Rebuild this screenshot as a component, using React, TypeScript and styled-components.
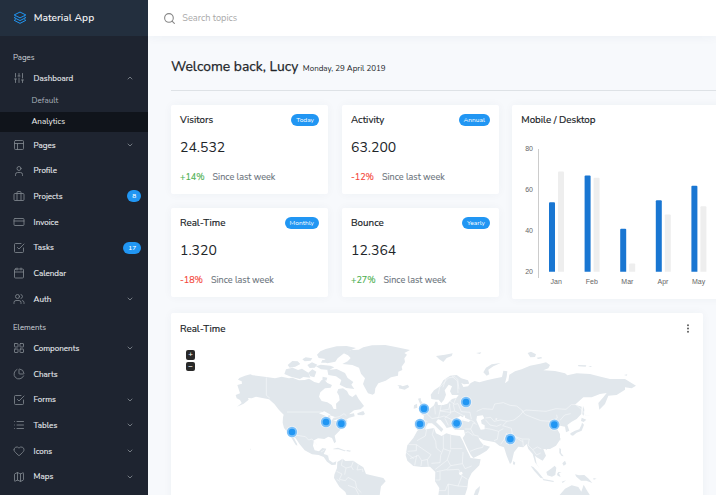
import React from "react";
import styled, { createGlobalStyle, css } from "styled-components";
import {
  SlidersVertical, Layout, User, Luggage, CreditCard, SquareCheck, Calendar,
  Users, LayoutGrid, ChartPie, List, Heart, Map as MapIcon, ChevronDown, ChevronUp, Search,
} from "lucide-react";

const Global = createGlobalStyle`
  * { box-sizing: border-box; }
  html, body { margin: 0; height: 100%; overflow: hidden; }
  body { background: #f7f9fc; font-family: Nunito, Lato, sans-serif; color: #212529; }
`;

const Shell = styled.div`
  display: flex;
  width: 716px;
  height: 495px;
  overflow: hidden;
`;

const Sidebar = styled.nav`
  flex: 0 0 148px;
  background: #1e2430;
  color: #e6e8ea;
`;

const Brand = styled.div`
  display: flex;
  align-items: center;
  height: 36px;
  padding-left: 13px;
  gap: 6.7px;
  background: #232f3e;
  font-size: 10.2px;
  font-weight: 600;
  color: #f0f1f3;
  svg { color: #2196f3; }
`;

const Section = styled.div<{ $first?: boolean }>`
  height: ${(p) => (p.$first ? "29.3px" : "23.5px")};
  padding: ${(p) => (p.$first ? "15.5px" : "9.7px")} 0 0 13px;
  font-size: 7.9px;
  line-height: 12px;
  color: #ced4da;
`;

const Item = styled.div`
  display: flex;
  align-items: center;
  height: 25.7px;
  padding: 0 14px 0 13px;
  font-size: 8.05px;
  color: #e9ecef;
  > svg { color: #80868e; }
`;

const ItemLabel = styled.span`
  flex: 1;
  padding-left: 8.6px;
  -webkit-text-stroke: 0.1px;
`;

const Count = styled.span`
  margin-right: -7px;
  padding: 0 4.8px;
  border-radius: 6px;
  background: #2196f3;
  color: #fff;
  font-size: 6.6px;
  font-weight: 600;
  line-height: 12px;
`;

const SubItem = styled.div<{ $active?: boolean }>`
  height: 20.6px;
  padding-left: 31.5px;
  font-size: 8.05px;
  line-height: 20.8px;
  color: #adb5bd;
  ${(p) => p.$active && css`background: #10141b; color: #f3f4f5;`}
`;

const Main = styled.main`
  flex: 1;
  min-width: 0;
`;

const Topbar = styled.header`
  display: flex;
  align-items: center;
  gap: 6.3px;
  height: 36px;
  padding-left: 15px;
  background: #fff;
  box-shadow: 0 0 12px rgba(40, 60, 100, 0.06);
  color: #a9a9a9;
  font-size: 9.2px;
  svg { color: #868686; }
`;

const Content = styled.div`
  padding: 0 0 0 23px;
`;

const Heading = styled.div`
  display: flex;
  align-items: baseline;
  gap: 4.5px;
  height: 54.5px;
  padding-top: 21px;
  margin-bottom: 14px;
  border-bottom: 1px solid #dee2e6;
`;

const Welcome = styled.h1`
  margin: 0;
  font-size: 13.9px;
  line-height: 19px;
  font-weight: 400;
  -webkit-text-stroke: 0.25px;
`;

const Today = styled.span`
  font-size: 8px;
`;

const Overview = styled.section`
  display: flex;
  gap: 13px;
  height: 194.5px;
  margin-bottom: 14px;
`;

const StatGrid = styled.div`
  display: grid;
  grid-template-columns: 157px 157px;
  grid-template-rows: 89px 89px;
  gap: 14.5px 14px;
  flex: none;
`;

const Card = styled.article`
  background: #fff;
  border-radius: 2px;
  box-shadow: 0 0 10px rgba(40, 60, 100, 0.045);
`;

const StatCard = styled(Card)`
  padding: 9px;
`;

const CardHead = styled.div`
  display: flex;
  align-items: center;
  justify-content: space-between;
  height: 12px;
`;

const CardTitle = styled.h2`
  margin: 0;
  font-size: 9.8px;
  line-height: 12px;
  font-weight: 400;
  -webkit-text-stroke: 0.2px;
`;

const Period = styled.span`
  padding: 0 5px;
  border-radius: 6px;
  background: #2196f3;
  color: #fff;
  font-size: 6.6px;
  line-height: 12px;
`;

const Figure = styled.div`
  margin-top: 12px;
  font-size: 14px;
  line-height: 20px;
`;

const Trend = styled.div<{ $up: boolean }>`
  display: flex;
  gap: 8px;
  margin-top: 13px;
  font-size: 9px;
  line-height: 12px;
  color: ${(p) => (p.$up ? "#4caf50" : "#f44336")};
  -webkit-text-stroke: 0.12px;
`;

const Muted = styled.span`
  color: #6c757d;
`;

const ChartCard = styled(Card)`
  flex: 0 0 327px;
  padding: 9.3px 9.3px;
`;

const ChartSvg = styled.svg`
  display: block;
  margin-top: 19.2px;
  margin-left: -0.8px;
  text { font: 7px "Liberation Sans", sans-serif; fill: #666; }
`;

const MapCard = styled(Card)`
  width: 532px;
  height: 260px;
  padding: 9.6px 9px;
`;

const MapBody = styled.div`
  display: flex;
  padding-top: 15.6px;
`;

const ZoomControls = styled.div`
  display: flex;
  flex-direction: column;
  gap: 2px;
  flex: none;
  width: 16px;
  padding-left: 5.7px;
`;

const ZoomButton = styled.div`
  width: 9.6px;
  height: 9.4px;
  border-radius: 2px;
  background: #292929;
  color: #fff;
  text-align: center;
  font: 8px/9px "Liberation Sans", sans-serif;
`;

const MapSvg = styled.svg`
  flex: none;
  margin-top: -10.4px;
  .land { fill: #e1e7ec; }
  .water { fill: #fff; }
  .border { fill: none; stroke: #f8fafb; stroke-width: 1.7; stroke-linejoin: round; }
`;

const stats = [
  { title: "Visitors", period: "Today", value: "24.532", change: "+14%", up: true },
  { title: "Activity", period: "Annual", value: "63.200", change: "-12%", up: false },
  { title: "Real-Time", period: "Monthly", value: "1.320", change: "-18%", up: false },
  { title: "Bounce", period: "Yearly", value: "12.364", change: "+27%", up: true },
];

const months = [
  { name: "Jan", mobile: 54, desktop: 69 },
  { name: "Feb", mobile: 67, desktop: 66 },
  { name: "Mar", mobile: 41, desktop: 24 },
  { name: "Apr", mobile: 55, desktop: 48 },
  { name: "May", mobile: 62, desktop: 52 },
];

type Entry = { icon: React.ElementType; label: string; count?: number; more?: boolean };

const pages: Entry[] = [
  { icon: Layout, label: "Pages", more: true },
  { icon: User, label: "Profile" },
  { icon: Luggage, label: "Projects", count: 8 },
  { icon: CreditCard, label: "Invoice" },
  { icon: SquareCheck, label: "Tasks", count: 17 },
  { icon: Calendar, label: "Calendar" },
  { icon: Users, label: "Auth", more: true },
];

const elements: Entry[] = [
  { icon: LayoutGrid, label: "Components", more: true },
  { icon: ChartPie, label: "Charts" },
  { icon: SquareCheck, label: "Forms", more: true },
  { icon: List, label: "Tables", more: true },
  { icon: Heart, label: "Icons", more: true },
  { icon: MapIcon, label: "Maps", more: true },
];

// Feather outlines that differ from the icon package's current drawings.
const Briefcase = () => (
  <svg width="12" height="12" viewBox="0 0 24 24" fill="none" stroke="currentColor" strokeWidth="1.7" strokeLinejoin="round">
    <rect x="2" y="7" width="20" height="14" rx="2" />
    <path d="M8 21V5a2 2 0 0 1 2-2h4a2 2 0 0 1 2 2v16" />
  </svg>
);
const CheckBox = () => (
  <svg width="12" height="12" viewBox="0 0 24 24" fill="none" stroke="currentColor" strokeWidth="1.7" strokeLinecap="round" strokeLinejoin="round">
    <path d="M9 11l3 3L22 4" />
    <path d="M21 12v7a2 2 0 0 1-2 2H5a2 2 0 0 1-2-2V5a2 2 0 0 1 2-2h11" />
  </svg>
);
const Stack = () => (
  <svg width="14" height="14" viewBox="0 0 24 24" fill="none" stroke="currentColor" strokeWidth="1.7" strokeLinejoin="round">
    <path d="M12 1.8 22 6.8 12 11.8 2 6.8Z" />
    <path d="M4.5 10 2 11.4l10 5 10-5L19.500 10M4.500 14.600 2 16l10 5.200L22 16l-2.500-1.400" />
  </svg>
);

const NavEntry = ({ icon: Icon, label, count, more }: Entry) => (
  <Item>
    {Icon === Luggage ? <Briefcase /> : Icon === SquareCheck ? <CheckBox /> : <Icon size={12} strokeWidth={1.7} />}
    <ItemLabel>{label}</ItemLabel>
    {count !== undefined && <Count>{count}</Count>}
    {more && <ChevronDown size={8} strokeWidth={2.6} />}
  </Item>
);

const yOf = (v: number) => 4 + ((80 - v) / 60) * 122.7;

const BarChart = () => (
  <ChartSvg width="309" height="142" viewBox="0 0 309 142">
    {[80, 60, 40, 20].map((t) => (
      <text key={t} x="12" y={yOf(t) + 2.2} textAnchor="end">{t}</text>
    ))}
    <path d="M17.500 4V133" stroke="#ccc" strokeWidth="1" />
    {months.map((m, i) => (
      <g key={m.name}>
        <path fill="#1976d2" d={`M${28 + i * 35.6} 126.7V${yOf(m.mobile) + 1}q0-1 1-1h4q1 0 1 1V126.7z`} />
        <path fill="#eee" d={`M${37 + i * 35.6} 126.7V${yOf(m.desktop) + 1}q0-1 1-1h4q1 0 1 1V126.7z`} />
        <text x={35.2 + i * 35.6} y="138.5" textAnchor="middle">{m.name}</text>
      </g>
    ))}
  </ChartSvg>
);

const cities = [
  [381, 382], [483, 352], [529, 357], [777, 312], [765, 358],
  [903, 292], [875, 356], [1036, 403], [1168, 360],
];

const WorldMap = () => (
  <MapSvg width="500" height="160" viewBox="93 106 1500 480">
    <g className="land">
      <path d="M217 241l14-4-1-7-11-5 4-5 17-7 16-4 7 3 12 1 29 4 26 4 20-5 22 5 10-2 20 8 17-1 13-4 16 10 14 4 8-10 8-1 9 10 14 6-4 8-17 2-14 12-4 13 8 13 17 4 13 8 6 12 8 0-1-16 11-10-2-14-6-10 4-10 14-2 12 8 6 12 10 6 11-8 8 14 16 21-10 10-20 3-15 12 15-3 2 9-16 4-10 6 5 4-15 12-8 16-16 16 4 18-5 5-7-16-11-4-12 7-19-2-12 6-3 16 5 14 13 3 10-10 12 2-8 16 13 4 3 14 12 8 10-4-2 10-12 1-14-10-10-14-15-6-20-2-22-12-15-18-12-18-7-4 11 20 1 6-5-3-11-18-12-18-12-14-4-16 1-16 2-8-14-14-14-18-16-14-20-4-19-4-13 5-11-1 2 5-15 12-20 9 14-11-5-9-10-5-3-10 13-5z" />
      <path d="M456 150l10-10 16-7 33-8 30-1 28 6-35 15-20 16-7 10-24 5-16-6 11-7-21-3zM358 208l5-14 20-5 16 7 12-4 19 12 6 15-21-2-10 6-27-7zM368 181l14-12 16 1 8 8-15 8-17 3zM412 164l10-6 20 3-5 7-18 2zM427 181l14-8 16 7-8 9-15 1zM453 185l14-5 29 3 12 5-16 8-24-2zM430 204l12-10 12 7-6 17-12-3zM487 196l28-3 25 12 8 15 17 12-6 8 9 13-24-3-20-10 5-14-16-11-23-4zM473 216l14 3-3 9-12-3zM472 166l13 1-4 7-13 0zM577 326l18-7 5 9-6 4-16-1zM505 432l14-3 24 9-4 2-18-6-16 0zM547 436l11 2-3 3-12-2zM351 303l14 17 2 5-9-7zM255 432l3 1-1 3z" />
      <g transform="translate(495 90)">
        <path d="M12 430l1-10 8-20 1-18 16-10 8 7 24-1 14 10 16 10 8 20 29 7 23 5 7 10-14 15-4 27H50l-4-10-18-16z" />
        <path d="M38 54l26-8 22-1 14-7 26-6 40-1 31 6 43 9-17 9 8 5-8 11 2 11-10 14 2 10-12 5-1 12-21 5-16 10-22 8-9 15-2 15-6 4-14-4-10-18-5-10 6-17-12-14-6-18-20-8-30-3 16-8 9-10-8-8zM202 152l10 0 6 3 15-5 5 7-14 8-18-4 2-5zM318 64l27-4 23-4-3 8-15 6-10 12-12-8zM264 192l8-2 1 8 5 7 3 10 9 8-3 7-20 2 7-11-4-14zM252 212l9-5 1 12-11 3zM450 454l-2 14-5 14h-12l6-16zM438 55l16-2-4 5z" />
        <path d="M262 288l28-4 22-4 6 16 17 8 14-8 17 5 24 3 8 14 12 27 12 25 30 4-4 18-23 23-10 20-3 25-7 22h-80l3-22-13-20 1-28-16-16-25 1-25-3-18-16-5-16 5-30 18-22z" />
      </g>
      <g transform="translate(825 105)">
        <path d="M-76 262l0-19 26-1 2-14-10-6 16-6 14-11 10-8 4-11 6 0 2 10 16 0 12-4 8-8 6-6 14-4 6-8-20 0-6-11 6-15-10-5-12 17 4 13-6 15-8 10-8-10-8 0-14-2-2-13 10-13 18-12 10-18 20-14 20-2 14 10 20 6 4 10-16 2-8-4 6 12 14-2 8-10 12-6 14 4 22-6 20-5 26-5 4-19 12 2-2 16-5 20 10-8 3-18 17-10 20-6 25-11 30-6 18-4 12 8-5 10-15 6 35 2 30 7 7 6 28-6 40 2 32 8 28 7 45 0 33 20-13 8-20-3 0 7-25 16-25 2-10 25-17 17-3-20 15-17 10-13-20 3-25 10-25 0-25 22 20 6-1 22-14 15-15 8-13 10 6 17-10 5-3-17-15-3-10 8 10 17 0 17-12 18-18 10-20 0 8 20-10 15-18-10-5-5 5 25 10 15-15-20-7-25-13-15-5-15-10 10-15-2-13 17-7 30-5 5-10-25-8-25-14-5-13-10-35-7-15-8 5 10 10 12 20 6-10 12-20 12-20 10-8-10-12-24-12-26 7-10-3-14-27 0-10-10-15 4-8-12-10-12-8-2-6 8 22 22-6 8-18-18-10-8-12 0-6 10-6 18-10 2z" />
        <path d="M130 98l8-14 17-10 27-4-22 10-15 10 3 14-8 4zM220 364l6 5-3 8-4-4z" />
      </g>
      <g transform="translate(1035 0)">
        <path d="M53 145l10-4 15 8-3 8-14 1zM80 159l14-2 2 4-12 2zM204 181l25 1-2 4-22-1zM235 184l11 0-4 3zM342 211l10-2-2 4zM219 303l4 12-2 18-4-4zM215 339l14 6-8 7-8-3zM181 386l14-8 13-4 6-12 2-8 6 6-7 18-15 6-11 9-7-2zM148 430l5 3 0 12 8 10-6-1-7-9zM157 476l8-8 4 10-8 5zM106 432l6-1-3 6zM149 402l3-2-2 10zM62 484l8 3 15 16 16 19-10-3-18-20zM98 523l15 2 19 4-2 3-30-5zM109 502l14-10 11-9 5 6-3 22-10 5-14-4zM141 508l4-6 10 1-8 3 5 11-9-4zM195 509l12 3 16-1 13 11 11 13-18-7-16 0-14-12zM250 520l10 2-9 3zM155 531l13-4-10 8zM148 572l17-20 20-10 20 5 9 14 7-21 9 16 10 16z" />
      </g>
    </g>
    <g className="water" transform="translate(825 105)">
      <path d="M49 246l3-12 10-6 5 5 8-6 0 7 16 8-4 5-22-5zM111 229l17-2 5 9-10 6 2 10 9 5 0 12-12 1-5-11-8-18zM56 399l10-3 2 7-8 4z" />
      <path d="M164 238l8-2-2 4z" />
    </g>
    <g className="water">
      <path d="M462 326l16-6 19 10-7 2-4 10-5-9zM494 332l16 5-6 4-4 8zM504 349l14-6-3 6z" />
    </g>
    <g className="border">
      <path d="M304 218v54l10 8M366 322h102l20 8 15 10 20-4 14-9 7 6M395 392l26 4 10 10 10-3 15 18M468 442l10-6M486 452l10-2" />
      <g transform="translate(495 90)">
        <path d="M38 372l-4 20 14 8 16-4 6 10M70 380l-6 16M85 390l-4 16 14-2M20 410l16 8-8 16 18 4 8-10 22 12 4 20 14 14M48 400l-4 20M97 402l2 10M54 452l22 8 10 20M30 440l-10-6" />
        <path d="M235 330h24v18l-26 2M259 330l44 30-10 14-18 4-10-16-25 10M290 284l-4 20-25 14M312 280l-5 20 10 20 2 20 14 12M340 302v40l22 8M340 342l-8 20-2 22-26 2M362 300v42h35M362 345l-10 30 10 18 35-6 2-35M352 376l-36 28M362 393l-12 12-30 6M330 410v26h-14M350 406l36-2 10 20-12 30-30-6-8 20h-20M397 386l8 16 20-8M396 424l16 10M384 454l28 2M355 448v34M275 378l-2 16M260 362l-6 30M292 374l3 22M227 352l24 20" />
        <path d="M325 178l4-20 26-28 20-4 8 8 4 30M349 128l-10 30M262 256l30 4M286 232l20 20 20-4 4-20 26-4 4-16M314 215l2 24M334 211l-4 18 30 4 14-4 30 16M358 206l4 30-18 14M378 190l-8 20 4 18M322 250l20-6 26 12 2 14M345 252l10 20" />
      </g>
      <g transform="translate(825 105)">
        <path d="M36 110l16 14 2 36M30 184l14 10 10-2 10 24 26 2 4 20M110 215l18-8 30 2 6-16 26-4 20 8 20 2 20 16 8-4 60 4 30-8 30 2 16-14 14 0 20 18 8 14 12 0M250 215l-10 12-18 14-20 4-20-4-20 4-10-12-16 2M246 213l10 12 46 18 30 2 20-10-2-10M202 244l-14 14 26 8 4 22 28 10 22 0M136 240l14 16 20 4 14-6M132 265l22 4 22 6-4 24-10 4M176 275l14-8M200 280l-8 20-10 14M74 268l18 0 8-18 10 4M92 268l10 18 14 4M68 284l16-8 16 12M90 335l20-8 18-4 4-14M106 250l-12-8-30-2M218 288l30 18M248 300l2 20M268 298l-4 18 14 14 14-8 12 6M278 330l12 16 12-6M360 242l14-16 18-4" />
      </g>
    </g>
    {cities.map(([x, y]) => (
      <g key={`${x}-${y}`}>
        <circle cx={x} cy={y} r="18" fill="#fff" fillOpacity=".5" />
        <circle cx={x} cy={y} r="15.5" fill="#7cc0f8" />
        <circle cx={x} cy={y} r="10" fill="#2196f3" />
      </g>
    ))}
  </MapSvg>
);

export default function App() {
  return (
    <Shell>
      <Global />
      <Sidebar>
        <Brand><Stack />Material App</Brand>
        <Section $first>Pages</Section>
        <Item>
          <SlidersVertical size={12} strokeWidth={1.7} />
          <ItemLabel>Dashboard</ItemLabel>
          <ChevronUp size={8} strokeWidth={2.6} />
        </Item>
        <SubItem>Default</SubItem>
        <SubItem $active>Analytics</SubItem>
        {pages.map((p) => <NavEntry key={p.label} {...p} />)}
        <Section>Elements</Section>
        {elements.map((p) => <NavEntry key={p.label} {...p} />)}
      </Sidebar>
      <Main>
        <Topbar><Search size={13} strokeWidth={2} />Search topics</Topbar>
        <Content>
          <Heading>
            <Welcome>Welcome back, Lucy</Welcome>
            <Today>Monday, 29 April 2019</Today>
          </Heading>
          <Overview>
            <StatGrid>
              {stats.map((s) => (
                <StatCard key={s.title}>
                  <CardHead><CardTitle>{s.title}</CardTitle><Period>{s.period}</Period></CardHead>
                  <Figure>{s.value}</Figure>
                  <Trend $up={s.up}>{s.change}<Muted>Since last week</Muted></Trend>
                </StatCard>
              ))}
            </StatGrid>
            <ChartCard>
              <CardTitle>Mobile / Desktop</CardTitle>
              <BarChart />
            </ChartCard>
          </Overview>
          <MapCard>
            <CardHead>
              <CardTitle>Real-Time</CardTitle>
              <svg width="12" height="12" viewBox="0 0 12 12" fill="#555">
                <circle cx="6" cy="2.2" r="0.95" /><circle cx="6" cy="5.5" r="0.95" /><circle cx="6" cy="8.8" r="0.95" />
              </svg>
            </CardHead>
            <MapBody>
              <ZoomControls><ZoomButton>+</ZoomButton><ZoomButton>−</ZoomButton></ZoomControls>
              <WorldMap />
            </MapBody>
          </MapCard>
        </Content>
      </Main>
    </Shell>
  );
}
